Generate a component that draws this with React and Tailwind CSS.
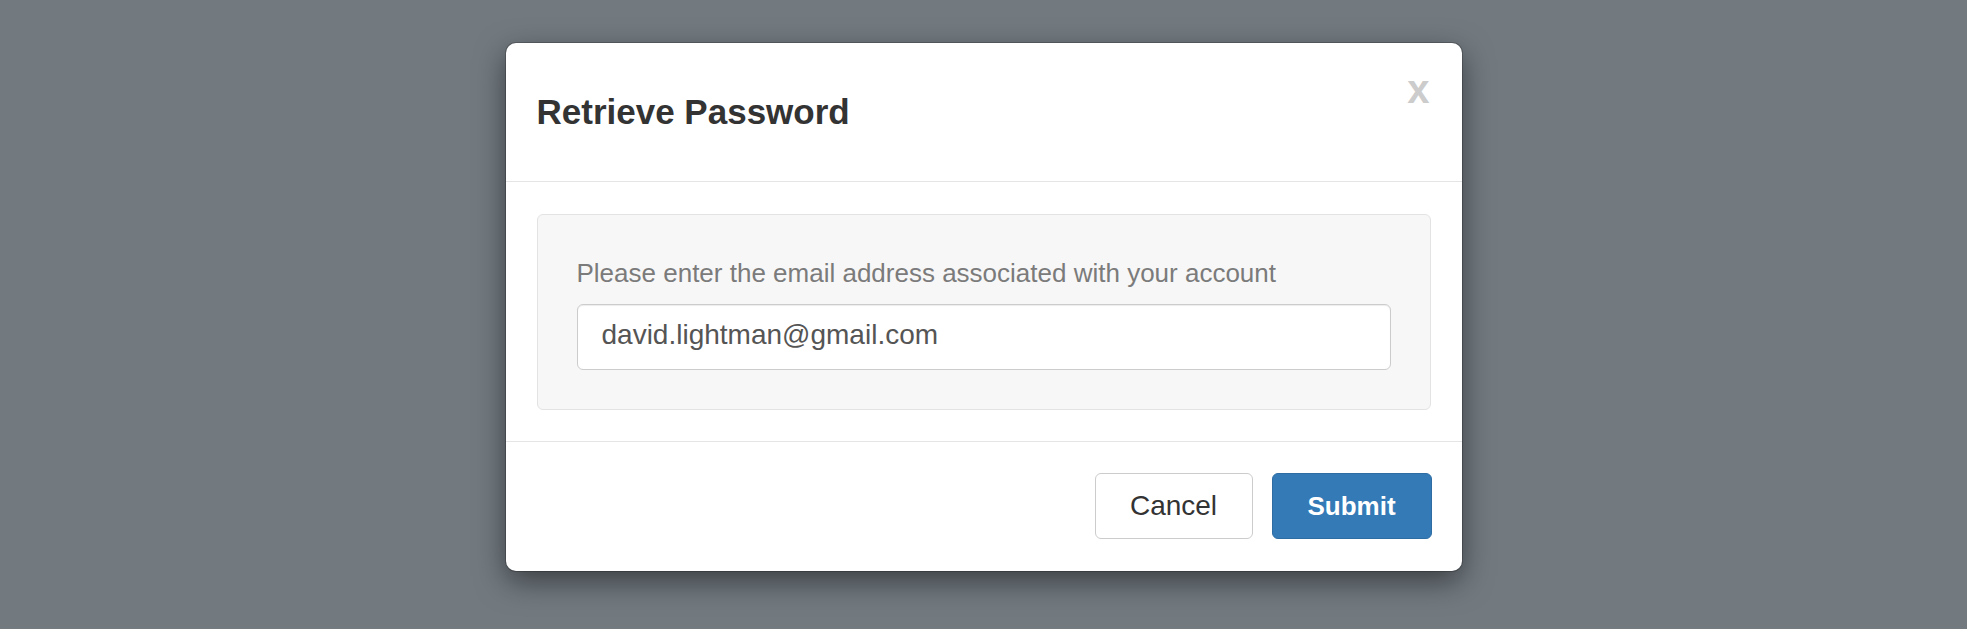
export default function App() {
  return (
    <div
      className="h-[629px] w-full overflow-hidden bg-[#727a80] pt-[43px]"
      style={{ fontFamily: '"Liberation Sans", Arial, sans-serif' }}
    >
      <div className="mx-auto w-[956px] rounded-[10px] bg-white shadow-[0_0_0_1px_rgba(0,0,0,0.2),0_10px_30px_rgba(0,0,0,0.5)]">
        {/* Header */}
        <div className="flex items-start justify-between border-b border-[#e5e5e5] pl-[31px] pr-[32px] pt-[49px] pb-[49px]">
          <h4 className="text-[35px] font-bold leading-[40px] text-[#333333]">
            Retrieve Password
          </h4>
          <button className="-mt-[23px] text-[40px] font-bold leading-[40px] text-[#cccccc]">
            x
          </button>
        </div>

        {/* Body */}
        <div className="px-[31px] pt-[32px] pb-[31px]">
          <div className="rounded-[6px] border border-[#e3e3e3] bg-[#f7f7f7] px-[39px] pt-[43px] pb-[39px]">
            <label className="block text-[26px] leading-[30px] text-[#7b7b7b]">
              Please enter the email address associated with your account
            </label>
            <input
              readOnly
              value="david.lightman@gmail.com"
              className="mt-[16px] block h-[66px] w-full rounded-[6px] border border-[#cccccc] bg-white px-[24px] pb-[4px] text-[28px] text-[#555555] shadow-[inset_0_1px_1px_rgba(0,0,0,0.075)] outline-none"
              style={{ fontFamily: '"Liberation Sans", Arial, sans-serif' }}
            />
          </div>
        </div>

        {/* Footer */}
        <div className="flex justify-end gap-[19px] border-t border-[#e5e5e5] pt-[31px] pr-[30px] pb-[32px]">
          <button className="flex h-[66px] w-[158px] items-center justify-center rounded-[6px] border border-[#cccccc] bg-white text-[28px] text-[#333333]">
            Cancel
          </button>
          <button className="flex h-[66px] w-[160px] items-center justify-center rounded-[6px] border border-[#2e6da4] bg-[#337ab7] text-[26px] font-bold text-white">
            Submit
          </button>
        </div>
      </div>
    </div>
  );
}
